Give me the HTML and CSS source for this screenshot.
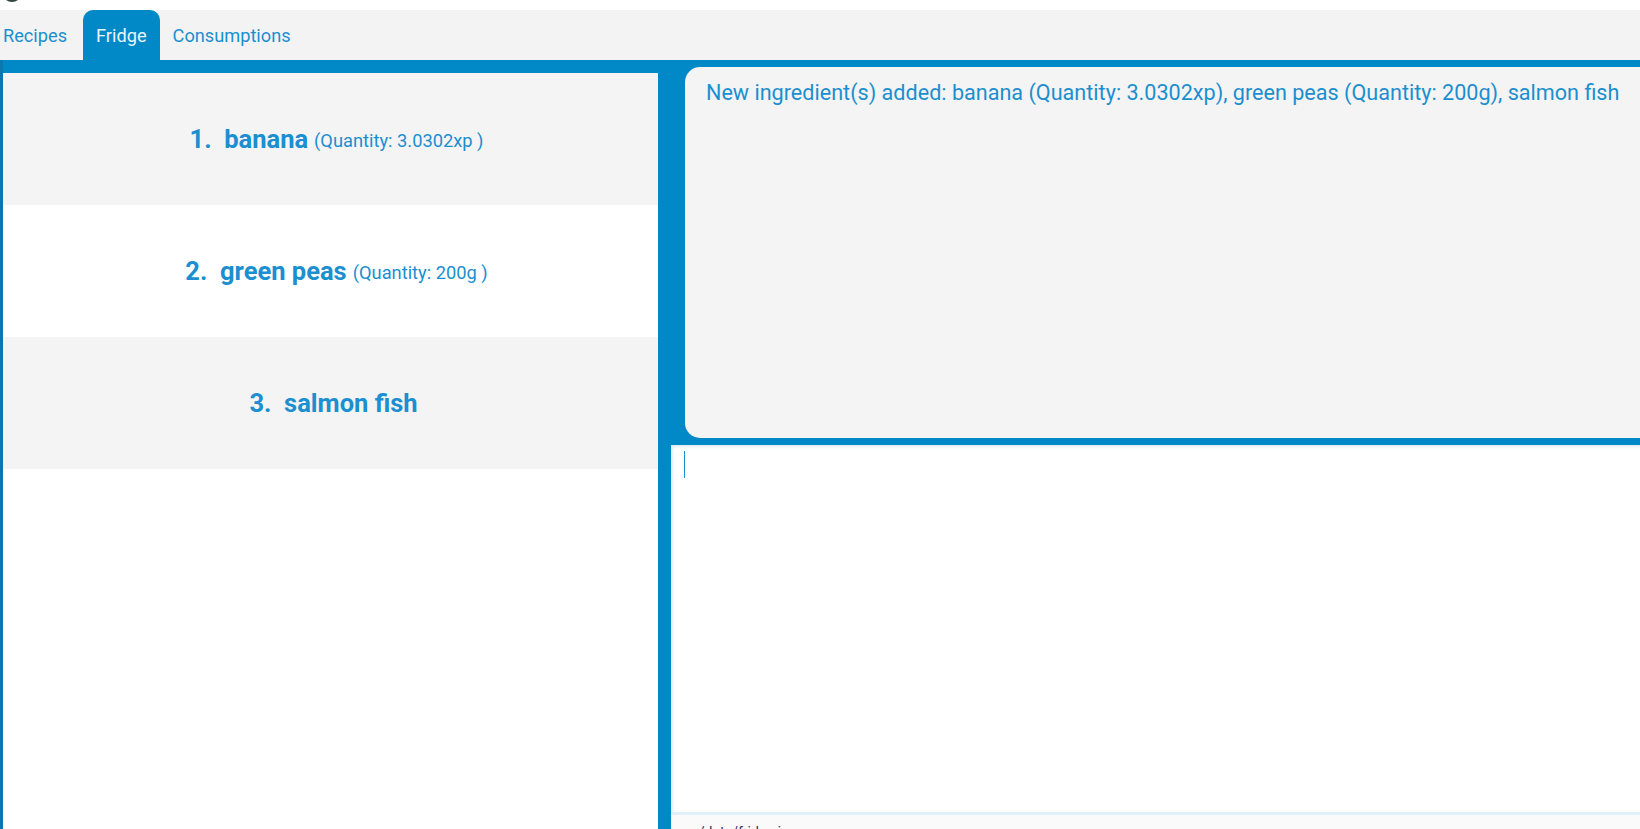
FILE: index.html
```html
<!DOCTYPE html>
<html>
<head>
<meta charset="utf-8">
<link rel="stylesheet" href="styles.css">
</head>
<body>
<div class="topstrip"><div class="logo"></div></div>
<div class="tabbar">
  <div class="tab first">Recipes</div>
  <div class="tab active">Fridge</div>
  <div class="tab">Consumptions</div>
</div>
<div class="main">
  <div class="list-panel">
    <div class="row odd"><span class="name">1.&nbsp; banana</span><span class="qty">(Quantity: 3.0302xp )</span></div>
    <div class="row"><span class="name">2.&nbsp; green peas</span><span class="qty">(Quantity: 200g )</span></div>
    <div class="row odd"><span class="name">3.&nbsp; salmon fish</span></div>
  </div>
  <div class="right">
    <div class="output-wrap">
      <div class="output">New ingredient(s) added: banana (Quantity: 3.0302xp), green peas (Quantity: 200g), salmon fish</div>
    </div>
    <div class="input"><div class="cursor"></div></div>
    <div class="status">./data/fridge.json</div>
  </div>
</div>
</body>
</html>
```
FILE: styles.css
```css
html, body {
  margin: 0;
  padding: 0;
  width: 1640px;
  height: 829px;
  overflow: hidden;
  background: #ffffff;
  font-family: Roboto, "Liberation Sans", sans-serif;
}
.topstrip {
  height: 10px;
  overflow: hidden;
}
.logo {
  width: 20px;
  height: 20px;
  margin-top: -18px;
  margin-left: 2px;
  border-radius: 50%;
  background: #2f4a3c;
}
.tabbar {
  height: 50px;
  background: #f3f3f3;
  display: flex;
  align-items: stretch;
  margin-left: -11px;
}
.tab {
  padding: 0 13px 0 13px;
  display: flex;
  align-items: center;
  font-size: 18.2px;
  color: #1b8fcf;
  border-radius: 10px 10px 0 0;
}
.tab.first {
  padding: 0 16px 0 14px;
}
.tab.active {
  background: #0189c7;
  color: #eaf5fb;
  padding: 0 13px 0 13px;
}
.main {
  display: flex;
  height: 769px;
  background: #0189c7;
  border-left: 3px solid #0a77ad;
}
.list-panel {
  width: 655px;
  flex: none;
  margin-top: 13px;
  background: #ffffff;
}
.row {
  height: 132px;
  display: flex;
  align-items: center;
  justify-content: center;
  gap: 6px;
  padding-left: 6px;
  color: #1b8fcf;
}
.row.odd {
  background: #f4f4f4;
}
.name {
  font-size: 25.5px;
  font-weight: 700;
}
.qty {
  font-size: 18.3px;
  padding-top: 2px;
  margin-right: -6px;
}
.right {
  flex: 1;
  min-width: 0;
  padding-left: 13px;
  display: flex;
  flex-direction: column;
}
.output-wrap {
  flex: none;
  padding: 7px 0 7px 14px;
}
.output {
  height: 358px;
  background: #f4f4f4;
  border-radius: 15px 0 0 15px;
  padding: 13px 0 0 21px;
  font-size: 21.6px;
  color: #1b8fcf;
  white-space: nowrap;
  overflow: hidden;
}
.input {
  flex: none;
  height: 361px;
  background: #ffffff;
  box-shadow: inset 2px 2px 3px #dcedf7;
  border-bottom: 3px solid #dff0f9;
  padding: 6px 0 0 13px;
}
.cursor {
  width: 1px;
  height: 27px;
  background: #1b8fcf;
}
.status {
  flex: 1;
  min-height: 0;
  overflow: hidden;
  background: #fafafa;
  padding: 9px 0 0 24px;
  font-size: 14px;
  color: #2e2d5c;
}
```
